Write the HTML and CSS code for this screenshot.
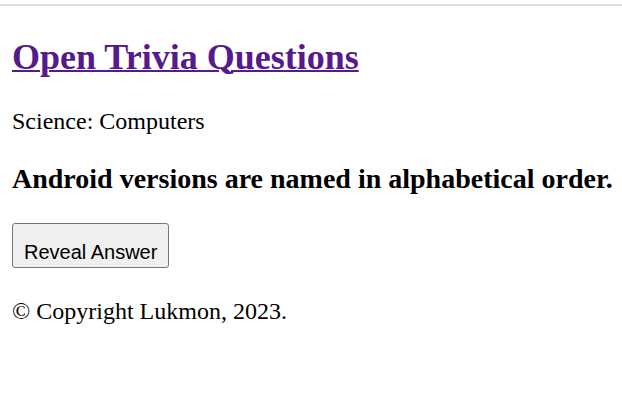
FILE: index.html
```html
<!DOCTYPE html>
<html lang="en">
<head>
<meta charset="utf-8">
<title>Open Trivia Questions</title>
<link rel="stylesheet" href="styles.css">
</head>
<body>
<div class="topbar"></div>
<main class="page">
  <h2 class="title"><a class="title-link" href="#">Open Trivia Questions</a></h2>
  <p class="category">Science: Computers</p>
  <h3 class="question">Android versions are named in alphabetical order.</h3>
  <div class="actions"><button class="reveal" type="button">Reveal Answer</button></div>
  <p class="footer">© Copyright Lukmon, 2023.</p>
</main>
</body>
</html>
```
FILE: styles.css
```css
html, body {
  margin: 0;
  padding: 0;
  background: #ffffff;
}
body {
  font-family: "Liberation Serif", "Times New Roman", serif;
  color: #000000;
}
.topbar {
  margin-top: 4px;
  height: 2px;
  background: #dddddd;
}
.page {
  padding: 0 12px;
  display: flow-root;
}
.title {
  font-size: 36px;
  font-weight: bold;
  line-height: 41px;
  margin: 31px 0 0;
  white-space: nowrap;
}
.title-link {
  color: #551a8b;
  text-decoration: underline;
  text-decoration-thickness: 2px;
}
.category {
  font-size: 24px;
  line-height: 28px;
  margin: 29px 0 0;
}
.question {
  font-size: 28px;
  font-weight: bold;
  line-height: 32px;
  margin: 28px 0 0;
  white-space: nowrap;
}
.actions {
  margin: 28px 0 0;
}
.reveal {
  font-family: "Liberation Sans", Arial, sans-serif;
  font-size: 20px;
  line-height: 23px;
  color: #000000;
  background: #efefef;
  border: 1px solid #767676;
  border-radius: 3px;
  padding: 16px 10px 3px 11px;
  margin: 0;
  width: 157px;
  height: 45px;
  box-sizing: border-box;
  text-align: left;
}
.footer {
  font-size: 24px;
  line-height: 28px;
  margin: 29px 0 0;
}
```
